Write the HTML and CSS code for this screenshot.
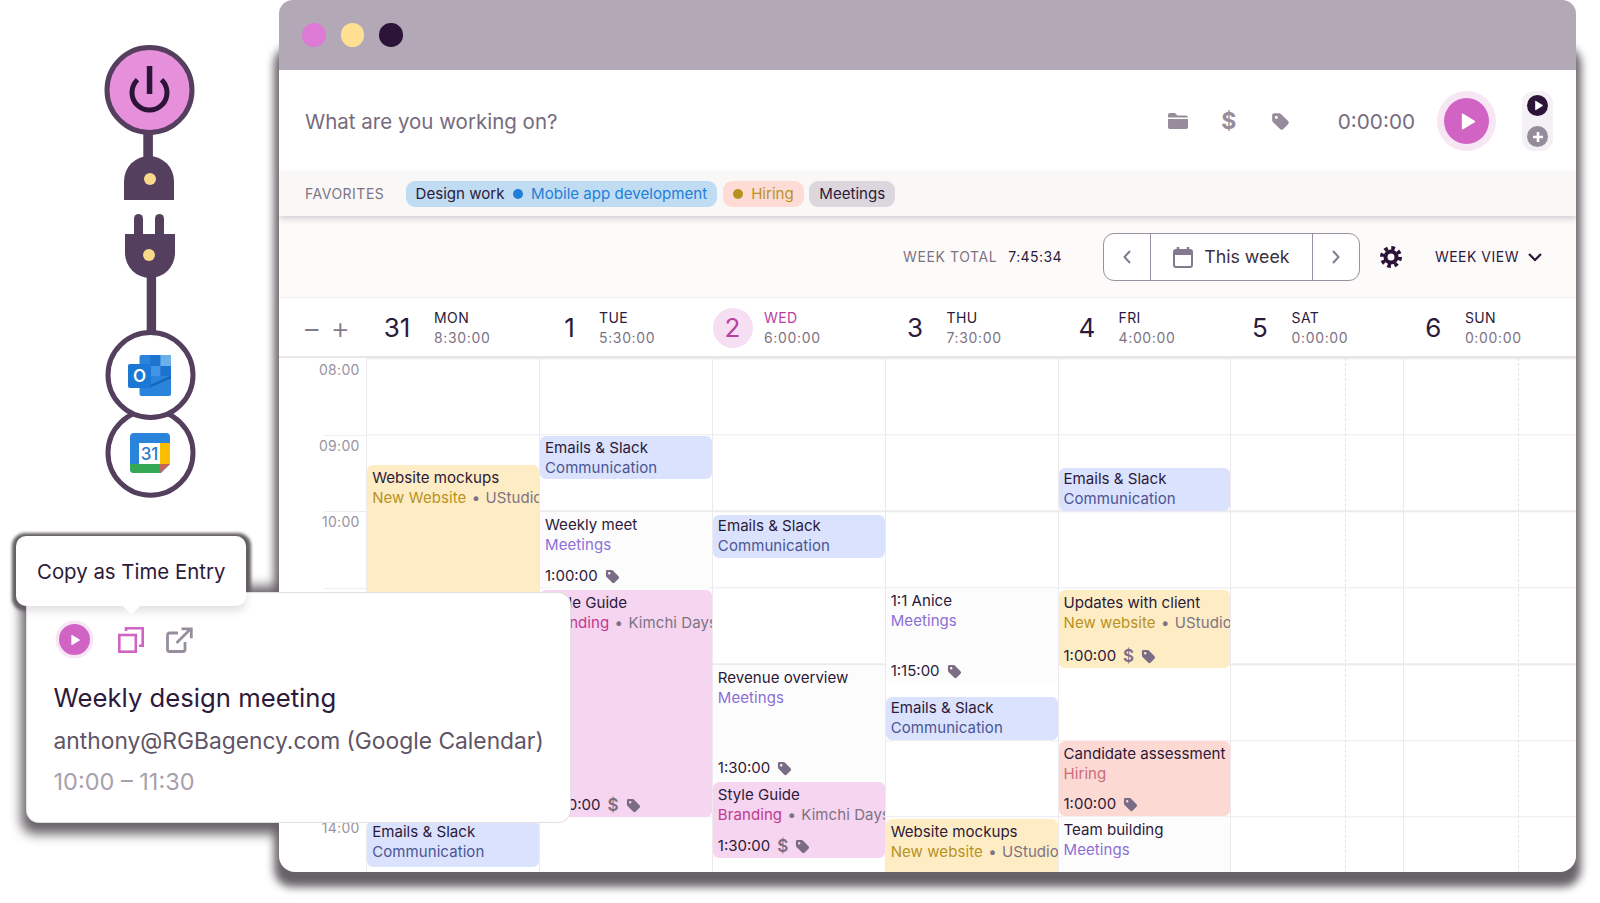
FILE: index.html
```html
<!DOCTYPE html>
<html lang="en">
  <head>
    <meta charset="utf-8">
    <title>Calendar</title>
    <link rel="stylesheet" href="styles.css">
  </head>
  <body>
    <svg class="sprites" width="0" height="0">
      <symbol id="tag" viewBox="0 0 16 16">
        <path fill-rule="evenodd" d="M1 2.5A1.5 1.5 0 0 1 2.5 1H7a2 2 0 0 1 1.4.6l6 6a2 2 0 0 1 0 2.8l-4 4a2 2 0 0 1-2.8 0l-6-6A2 2 0 0 1 1 7zM4.5 3.2a1.3 1.3 0 1 0 0 2.6 1.3 1.3 0 0 0 0-2.6z"/>
      </symbol>
      <symbol id="play" viewBox="0 0 20 20">
        <path d="M4 2.600a1 1 0 0 1 1.500-.8l12 7.400a1 1 0 0 1 0 1.600l-12 7.400a1 1 0 0 1-1.500-.8z"/>
      </symbol>
    </svg>

    <div class="stage">
      <svg class="connector" width="279" height="500" viewBox="0 0 279 500">
        <rect x="143.3" y="130" width="9.6" height="30" fill="#553f5e"/>
        <circle cx="149.5" cy="90" r="42.5" fill="#e690dc" stroke="#553f5e" stroke-width="5"/>
        <path d="M137.500 79.800a17.500 17.500 0 1 0 24 0" fill="none" stroke="#2c1338" stroke-width="5"/>
        <rect x="146.800" y="66" width="5.5" height="28" fill="#2c1338"/>
        <path d="M124 200v-19a25 25 0 0 1 50 0v19z" fill="#553f5e"/>
        <circle cx="150" cy="179" r="6" fill="#f9d98a"/>

        <rect x="134" y="214" width="9" height="30" rx="4.5" fill="#553f5e"/>
        <rect x="155" y="214" width="9" height="30" rx="4.5" fill="#553f5e"/>
        <path d="M125 234h50v19a25 25 0 0 1-50 0z" fill="#553f5e"/>
        <circle cx="149" cy="255" r="6" fill="#f9d98a"/>
        <rect x="146.7" y="270" width="9.4" height="66" fill="#553f5e"/>

        <circle cx="150.5" cy="452.7" r="42.5" fill="#fff" stroke="#553f5e" stroke-width="5"/>
        <path d="M130 437a4 4 0 0 1 4-4h32a4 4 0 0 1 4 4v27l-9 9h-27a4 4 0 0 1-4-4z" fill="#2a84dc"/>
        <path d="M130 464h31v9h-27a4 4 0 0 1-4-4z" fill="#34a853"/>
        <rect x="160" y="443" width="10" height="21" fill="#fbbc04"/>
        <path d="M160 464h10l-10 9z" fill="#c4645a"/>
        <rect x="139" y="443" width="21" height="21" fill="#fff"/>
        <text x="149.5" y="460" class="cal-num">31</text>

        <circle cx="150.5" cy="375" r="42.5" fill="#fff" stroke="#553f5e" stroke-width="5"/>
        <rect x="139.500" y="355" width="31.500" height="41" rx="2" fill="#2a84dc"/>
        <rect x="150" y="355" width="10.500" height="11" fill="#1d74cf"/>
        <rect x="160.500" y="355" width="10.500" height="11" fill="#6cb0ea"/>
        <rect x="150" y="366" width="10.500" height="10" fill="#3f95e3"/>
        <rect x="160.500" y="366" width="10.500" height="10" fill="#1d74cf"/>
        <path d="M150 385l21-9.500v3l-21 9z" fill="#1766b8"/>
        <rect x="128" y="364" width="23" height="24" rx="2" fill="#1b78d4"/>
        <text x="139.500" y="382" class="outlook-o">O</text>
      </svg>

      <main class="window">
        <div class="frame">
          <div class="titlebar">
            <span class="light light-pink"></span>
            <span class="light light-yellow"></span>
            <span class="light light-dark"></span>
          </div>

          <div class="timer">
            <div class="timer-input">What are you working on?</div>
            <div class="timer-icons">
              <svg class="icon-folder" width="22" height="16" viewBox="0 0 22 16"><path d="M1 2a2 2 0 0 1 2-2h5l2.500 2.500H19a2 2 0 0 1 2 2H1zM1 6h20v8a2 2 0 0 1-2 2H3a2 2 0 0 1-2-2z"/></svg>
              <span class="dollar">$</span>
              <svg class="icon-tag" width="19" height="19"><use href="#tag"/></svg>
            </div>
            <div class="timer-time">0:00:00</div>
            <button class="play-big"><svg width="19" height="19"><use href="#play"/></svg></button>
            <div class="mode-switch">
              <span class="mode mode-on"><svg width="11" height="11"><use href="#play"/></svg></span>
              <span class="mode mode-off">
                <svg width="12" height="12" viewBox="0 0 12 12"><path d="M6 1v10M1 6h10" stroke="#fff" stroke-width="2.600"/></svg>
              </span>
            </div>
          </div>

          <div class="favorites">
            <span class="fav-label">FAVORITES</span>
            <span class="chip chip-blue">Design work <i class="dot dot-blue"></i> <span class="chip-project-blue">Mobile app development</span></span>
            <span class="chip chip-salmon"><i class="dot dot-gold"></i> <span class="chip-project-gold">Hiring</span></span>
            <span class="chip chip-grey">Meetings</span>
          </div>

          <div class="weekbar">
            <span class="week-total">WEEK TOTAL</span>
            <span class="week-sum">7:45:34</span>
            <div class="date-nav">
              <span class="nav-arrow"><svg width="10" height="16" viewBox="0 0 10 16"><path d="M8 2L2.500 8 8 14" fill="none" stroke="#85798e" stroke-width="2"/></svg></span>
              <span class="nav-mid">
                <svg width="20" height="22" viewBox="0 0 20 22"><path d="M5 1v4M15 1v4" stroke="#85798e" stroke-width="2.500"/><rect x="1" y="4" width="18" height="17" rx="2" fill="none" stroke="#85798e" stroke-width="2"/><rect x="1" y="4" width="18" height="5" fill="#85798e"/></svg>
                This week
              </span>
              <span class="nav-arrow"><svg width="10" height="16" viewBox="0 0 10 16"><path d="M2 2l5.500 6L2 14" fill="none" stroke="#85798e" stroke-width="2"/></svg></span>
            </div>
            <svg class="gear" width="22" height="22" viewBox="0 0 22 22">
              <circle cx="11" cy="11" r="5.500" fill="none" stroke="#2c1338" stroke-width="4"/>
              <circle cx="11" cy="11" r="9" fill="none" stroke="#2c1338" stroke-width="4" stroke-dasharray="3.600 3.470"/>
            </svg>
            <span class="week-view">WEEK VIEW</span>
            <svg class="week-chevron" width="16" height="10" viewBox="0 0 16 10"><path d="M2 2l6 6 6-6" fill="none" stroke="#2c1338" stroke-width="2.200"/></svg>
          </div>

          <div class="dayhead">
            <div class="zoom-btns"><span>−</span><span>+</span></div>
            <div class="days">
              <div class="day day-mon"><span class="num">31</span><div><div class="dname">MON</div><div class="dsum">8:30:00</div></div></div>
              <div class="day day-tue"><span class="num">1</span><div><div class="dname">TUE</div><div class="dsum">5:30:00</div></div></div>
              <div class="day day-today"><span class="num">2</span><div><div class="dname">WED</div><div class="dsum">6:00:00</div></div></div>
              <div class="day"><span class="num">3</span><div><div class="dname">THU</div><div class="dsum">7:30:00</div></div></div>
              <div class="day"><span class="num">4</span><div><div class="dname">FRI</div><div class="dsum">4:00:00</div></div></div>
              <div class="day"><span class="num">5</span><div><div class="dname">SAT</div><div class="dsum">0:00:00</div></div></div>
              <div class="day"><span class="num">6</span><div><div class="dname">SUN</div><div class="dsum">0:00:00</div></div></div>
            </div>
          </div>

          <div class="calendar">
            <div class="hours">
              <div class="hour">08:00</div>
              <div class="hour">09:00</div>
              <div class="hour">10:00</div>
              <div class="hour"></div>
              <div class="hour"></div>
              <div class="hour"></div>
              <div class="hour">14:00</div>
            </div>

            <div class="col">
              <div class="ev ev-yellow" style="top:107px;height:235px">
                <div class="ev-title">Website mockups</div>
                <div class="ev-sub"><span>New Website</span> <i>•</i> <em>UStudio</em></div>
              </div>
              <div class="ev ev-blue" style="top:463px;height:46px">
                <div class="ev-title">Emails &amp; Slack</div>
                <div class="ev-sub"><span>Communication</span></div>
              </div>
            </div>

            <div class="col">
              <div class="ev ev-blue" style="top:78px;height:43px">
                <div class="ev-title ev-nudge">Emails &amp; Slack</div>
                <div class="ev-sub"><span>Communication</span></div>
              </div>
              <div class="ev ev-white" style="top:154px;height:76px">
                <div class="ev-title">Weekly meet</div>
                <div class="ev-sub"><span>Meetings</span></div>
                <div class="ev-time">1:00:00 <svg width="15" height="15"><use href="#tag"/></svg></div>
              </div>
              <div class="ev ev-pink" style="top:232px;height:227px">
                <div class="ev-title">Style Guide</div>
                <div class="ev-sub"><span>Branding</span> <i>•</i> <em>Kimchi Days</em></div>
                <div class="ev-time">2:30:00 <b>$</b> <svg width="15" height="15"><use href="#tag"/></svg></div>
              </div>
            </div>

            <div class="col">
              <div class="ev ev-blue" style="top:157px;height:43px">
                <div class="ev-title">Emails &amp; Slack</div>
                <div class="ev-sub"><span>Communication</span></div>
              </div>
              <div class="ev ev-white" style="top:307px;height:115px">
                <div class="ev-title">Revenue overview</div>
                <div class="ev-sub"><span>Meetings</span></div>
                <div class="ev-time">1:30:00 <svg width="15" height="15"><use href="#tag"/></svg></div>
              </div>
              <div class="ev ev-pink" style="top:424px;height:76px">
                <div class="ev-title">Style Guide</div>
                <div class="ev-sub"><span>Branding</span> <i>•</i> <em>Kimchi Days</em></div>
                <div class="ev-time">1:30:00 <b>$</b> <svg width="15" height="15"><use href="#tag"/></svg></div>
              </div>
            </div>

            <div class="col">
              <div class="ev ev-white" style="top:230px;height:95px">
                <div class="ev-title">1:1 Anice</div>
                <div class="ev-sub"><span>Meetings</span></div>
                <div class="ev-time">1:15:00 <svg width="15" height="15"><use href="#tag"/></svg></div>
              </div>
              <div class="ev ev-blue" style="top:339px;height:43px">
                <div class="ev-title">Emails &amp; Slack</div>
                <div class="ev-sub"><span>Communication</span></div>
              </div>
              <div class="ev ev-yellow" style="top:461px;height:60px">
                <div class="ev-title">Website mockups</div>
                <div class="ev-sub"><span>New website</span> <i>•</i> <em>UStudio</em></div>
              </div>
            </div>

            <div class="col">
              <div class="ev ev-blue" style="top:110px;height:43px">
                <div class="ev-title">Emails &amp; Slack</div>
                <div class="ev-sub"><span>Communication</span></div>
              </div>
              <div class="ev ev-yellow" style="top:232px;height:78px">
                <div class="ev-title">Updates with client</div>
                <div class="ev-sub"><span>New website</span> <i>•</i> <em>UStudio</em></div>
                <div class="ev-time">1:00:00 <b>$</b> <svg width="15" height="15"><use href="#tag"/></svg></div>
              </div>
              <div class="ev ev-salmon" style="top:383px;height:75px">
                <div class="ev-title">Candidate assessment</div>
                <div class="ev-sub"><span>Hiring</span></div>
                <div class="ev-time">1:00:00 <svg width="15" height="15"><use href="#tag"/></svg></div>
              </div>
              <div class="ev ev-white" style="top:459px;height:60px">
                <div class="ev-title">Team building</div>
                <div class="ev-sub"><span>Meetings</span></div>
              </div>
            </div>

            <div class="col col-weekend"></div>
            <div class="col col-weekend"></div>
          </div>
        </div>
      </main>

      <div class="popup-shadow"></div>
      <div class="tooltip-shadow"></div>
      <div class="popup">
        <div class="popup-actions">
          <button class="play-small"><svg width="12" height="12"><use href="#play"/></svg></button>
          <svg class="act-copy" width="26" height="26" viewBox="0 0 26 26" fill="none" stroke-width="2.600"><rect x="1.300" y="8" width="16.500" height="16.700"/><path d="M8 4V1.300h16.700v17.500H21"/></svg>
          <svg class="act-open" width="27" height="26" viewBox="0 0 27 26" fill="none" stroke-width="2.800"><path d="M12 6H3.500a2 2 0 0 0-2 2v14.500a2 2 0 0 0 2 2H17a2 2 0 0 0 2-2V15"/><path d="M10.500 16L24 2.500M15.500 1.800h9.800v9.500"/></svg>
        </div>
        <div class="popup-title">Weekly design meeting</div>
        <div class="popup-sub">anthony@RGBagency.com (Google Calendar)</div>
        <div class="popup-time">10:00 – 11:30</div>
      </div>
      <div class="tooltip">Copy as Time Entry</div>
    </div>
  </body>
</html>
```

FILE: styles.css
```css
* {
    box-sizing: border-box;
}
body, html {
    height: 100%;
    overflow: hidden;
}
body {
    margin: 0;
    background: #fff;
    color: #2c1a3a;
    font: 15px/20px Inter, 'Liberation Sans', sans-serif;
}
button {
    border: 0;
    padding: 0;
}
.sprites {
    position: absolute;
}
.stage {
    position: relative;
    z-index: 0;
    display: flex;
    width: 1600px;
    height: 903px;
}
.connector {
    flex: none;
}
.cal-num {
    font: 500 17px Inter, sans-serif;
    fill: #2a7ad0;
    text-anchor: middle;
}
.outlook-o {
    font: 600 17px Inter, sans-serif;
    fill: #fff;
    text-anchor: middle;
}

/* window */
.window {
    position: relative;
    width: 1297px;
    height: 872px;
}
.window::before {
    content: '';
    position: absolute;
    z-index: -1;
    top: 46px;
    left: -5px;
    right: -5px;
    bottom: -15px;
    background: #676267;
    border-radius: 18px;
    filter: blur(4px);
}
.frame {
    height: 100%;
    background: #fff;
    border-radius: 14px 14px 16px 16px;
    overflow: hidden;
}
.titlebar {
    display: flex;
    align-items: center;
    gap: 15px;
    height: 70px;
    padding-left: 23px;
    background: #b3a9b6;
}
.light {
    width: 23.500px;
    height: 23.500px;
    border-radius: 50%;
}
.light-pink { background: #dd7ad6; }
.light-yellow { background: #ffdf91; }
.light-dark { background: #2c1338; }

/* timer row */
.timer {
    display: flex;
    align-items: center;
    height: 102px;
    padding-left: 26px;
}
.timer-input {
    flex: 1;
    padding-top: 2px;
    font-size: 20.500px;
    color: #766b7d;
}
.timer-icons {
    display: flex;
    align-items: center;
    gap: 0;
    fill: #968c9b;
    color: #968c9b;
}
.icon-folder {
    margin-right: 32px;
}
.dollar {
    width: 16px;
    margin-right: 34px;
    font-size: 23px;
    font-weight: 700;
    text-align: center;
}
.timer-time {
    margin-left: 48px;
    padding-top: 2px;
    font-size: 20.700px;
    color: #766b7d;
}
.play-big {
    display: flex;
    align-items: center;
    justify-content: center;
    width: 45px;
    height: 46px;
    margin-left: 29px;
    padding-left: 2px;
    border-radius: 50%;
    background: #d063c4;
    box-shadow: 0 0 0 7px #f7e6f4;
    fill: #fff;
}
.mode-switch {
    display: flex;
    flex-direction: column;
    align-items: center;
    gap: 10px;
    width: 31px;
    height: 60px;
    margin: 0 23px 0 33px;
    padding-top: 4px;
    border-radius: 12px;
    background: #f4f1f4;
}
.mode {
    display: flex;
    align-items: center;
    justify-content: center;
    width: 21px;
    height: 21px;
    border-radius: 50%;
}
.mode-on {
    padding-left: 1px;
    background: #2c1338;
    fill: #fff;
}
.mode-off {
    background: #958c9b;
}

/* favorites */
.favorites {
    position: relative;
    display: flex;
    align-items: center;
    gap: 5.500px;
    height: 44px;
    padding-left: 26px;
    background: #faf8f7;
    box-shadow: 0 3px 6px rgba(70, 50, 80, .22);
}
.fav-label {
    width: 95px;
    font-size: 14px;
    letter-spacing: .5px;
    color: #7d7385;
}
.chip {
    display: flex;
    align-items: center;
    gap: 8px;
    height: 26px;
    padding: 0 10px;
    border-radius: 9px;
    font-size: 15.100px;
}
.chip-blue { background: #bfdcf3; }
.chip-salmon { background: #fedcd5; }
.chip-grey { background: #dcd7dd; }
.chip-project-blue { color: #1f7fd8; }
.chip-project-gold { color: #b8921f; }
.dot {
    width: 10.500px;
    height: 10.500px;
    border-radius: 50%;
}
.dot-blue { background: #1f7fd8; }
.dot-gold { background: #b8921f; }

/* week bar */
.weekbar {
    display: flex;
    align-items: center;
    height: 81px;
    padding-left: 624px;
    background: #fdfbfa;
    font-size: 14px;
}
.week-total {
    letter-spacing: .6px;
    color: #7d7385;
}
.week-sum {
    margin-left: 11px;
    letter-spacing: .4px;
}
.date-nav {
    display: flex;
    width: 257px;
    height: 48px;
    margin-left: 41px;
    background: #fff;
    border: 1px solid #9a8fa3;
    border-radius: 11px;
}
.nav-arrow {
    display: flex;
    align-items: center;
    justify-content: center;
    width: 46px;
}
.nav-mid {
    display: flex;
    flex: 1;
    align-items: center;
    justify-content: center;
    gap: 11px;
    border-left: 1px solid #9a8fa3;
    border-right: 1px solid #9a8fa3;
    font-size: 17.800px;
    color: #3b2f45;
}
.gear {
    margin-left: 20px;
}
.week-view {
    margin-left: 33px;
    letter-spacing: .5px;
}
.week-chevron {
    margin-left: 8px;
}

/* day header */
.dayhead {
    display: flex;
    align-items: center;
    height: 61px;
    padding-top: 2px;
    border-top: 1px solid #f2eff1;
    border-bottom: 2px solid #e8e6e8;
    background: #fff;
}
.zoom-btns {
    display: flex;
    gap: 9px;
    width: 98px;
    padding-left: 23px;
    font-size: 30px;
    font-weight: 300;
    color: #85798e;
}
.days {
    display: grid;
    flex: 1;
    grid-template-columns: 172.500px 163px 182.500px 172px 173px 173.400px 1fr;
}
.day {
    display: flex;
    align-items: center;
    gap: 11.500px;
}
.day-mon { gap: 17px; }
.day-tue { gap: 9.500px; }
.day-today .num {
    background: #f6dff2;
    color: #b8419f;
}
.day-today .dname {
    color: #b8419f;
}
.num {
    display: flex;
    flex: none;
    align-items: center;
    justify-content: center;
    width: 40px;
    height: 40px;
    border-radius: 50%;
    font-size: 26px;
}
.dname {
    font-size: 14px;
    letter-spacing: .4px;
}
.dsum {
    font-size: 14px;
    letter-spacing: .65px;
    color: #7d7385;
}

/* calendar grid */
.calendar {
    display: grid;
    grid-template-columns: 87.200px repeat(7, 1fr);
    height: 514px;
}
.hour {
    position: relative;
    height: 76.400px;
    padding: 1.500px 6.500px 0 0;
    font-size: 14px;
    letter-spacing: .3px;
    text-align: right;
    color: #9a92a0;
}
.hour::before {
    content: '';
    position: absolute;
    top: 77px;
    right: 0;
    width: 42px;
    border-top: 1px solid #eeecee;
}
.col {
    position: relative;
    border-left: 1.500px solid #eceaec;
    background: repeating-linear-gradient(transparent 0 75px, #eceaec 75px 76.400px) 0 1.300px;
}
.col-weekend::after {
    content: '';
    position: absolute;
    top: 0;
    bottom: 0;
    left: 114px;
    border-left: 1px dashed #e6e3e6;
}
.ev {
    position: absolute;
    left: 0;
    right: 0;
    display: flex;
    flex-direction: column;
    padding: 2.500px 0 2px 5px;
    border-radius: 6px;
    overflow: hidden;
    white-space: nowrap;
}
.ev-title {
    font-size: 15.100px;
    line-height: 20.300px;
}
.ev-nudge {
    margin-top: 1px;
}
.ev-sub {
    font-size: 15px;
    line-height: 20.300px;
    letter-spacing: .08px;
}
.ev-sub i, .ev-sub em {
    font-style: normal;
    color: #7d7385;
}
.ev-sub i {
    margin: 0 1px;
}
.ev-time {
    display: flex;
    align-items: center;
    gap: 7px;
    margin-top: auto;
    font-size: 15px;
    line-height: 20px;
    fill: #7a6c84;
}
.ev-time b {
    font-size: 17px;
    font-weight: 600;
    color: #7a6c84;
}
.ev-blue { padding-top: 1px; background: #dbe2fd; }
.ev-blue .ev-sub { color: #4a5592; }
.ev-yellow { background: #feedc4; }
.ev-yellow .ev-sub { color: #b8921f; }
.ev-pink { background: #f5d5ef; }
.ev-pink .ev-sub { color: #c0398f; }
.ev-salmon { background: #fdd9d4; }
.ev-salmon .ev-sub { color: #c96b7a; }
.ev-white { background: #fdfcfd; }
.ev-white .ev-sub { color: #8a6fd6; }

/* popup and tooltip sit over the calendar, their shadows stay behind the window */
.popup-shadow {
    position: absolute;
    z-index: -1;
    left: 21px;
    top: 586px;
    width: 300px;
    height: 248px;
    background: #676267;
    border-radius: 14px;
    filter: blur(6px);
}
.tooltip-shadow {
    position: absolute;
    z-index: -1;
    left: 12px;
    top: 533px;
    width: 239px;
    height: 78px;
    background: #676267;
    border-radius: 13px;
    filter: blur(1.500px);
}
.popup {
    position: absolute;
    left: 27px;
    top: 593px;
    width: 543px;
    height: 229px;
    padding: 31px 26.500px 0;
    background: #fff;
    border-radius: 12px;
    box-shadow: 0 0 0 1px #e2dfe2;
    white-space: nowrap;
}
.popup-actions {
    display: flex;
    align-items: center;
}
.play-small {
    display: flex;
    align-items: center;
    justify-content: center;
    width: 31px;
    height: 31px;
    margin-left: 5px;
    padding-left: 1px;
    border-radius: 50%;
    background: #d063c4;
    box-shadow: 0 0 0 3.500px #f7e6f4;
    fill: #fff;
}
.act-copy {
    margin-left: 28px;
    stroke: #d063c4;
}
.act-open {
    margin-left: 22px;
    stroke: #968e9c;
}
.popup-title {
    margin-top: 25px;
    font-size: 25.700px;
    line-height: 36px;
}
.popup-sub {
    margin-top: 8px;
    font-size: 22.800px;
    line-height: 34px;
    color: #5f5566;
}
.popup-time {
    margin-top: 7px;
    font-size: 23.500px;
    line-height: 34px;
    color: #a8a1ad;
}
.tooltip {
    position: absolute;
    left: 16px;
    top: 536px;
    width: 230px;
    height: 70px;
    padding: 23px 0 0 21px;
    background: #fff;
    border-radius: 10px;
    font-size: 20.400px;
    line-height: 26px;
    box-shadow: 0 5px 8px rgba(70, 65, 72, .16);
}
.tooltip::after {
    content: '';
    position: absolute;
    left: 109px;
    bottom: -6px;
    width: 13px;
    height: 13px;
    background: #fff;
    transform: rotate(45deg);
}
```
